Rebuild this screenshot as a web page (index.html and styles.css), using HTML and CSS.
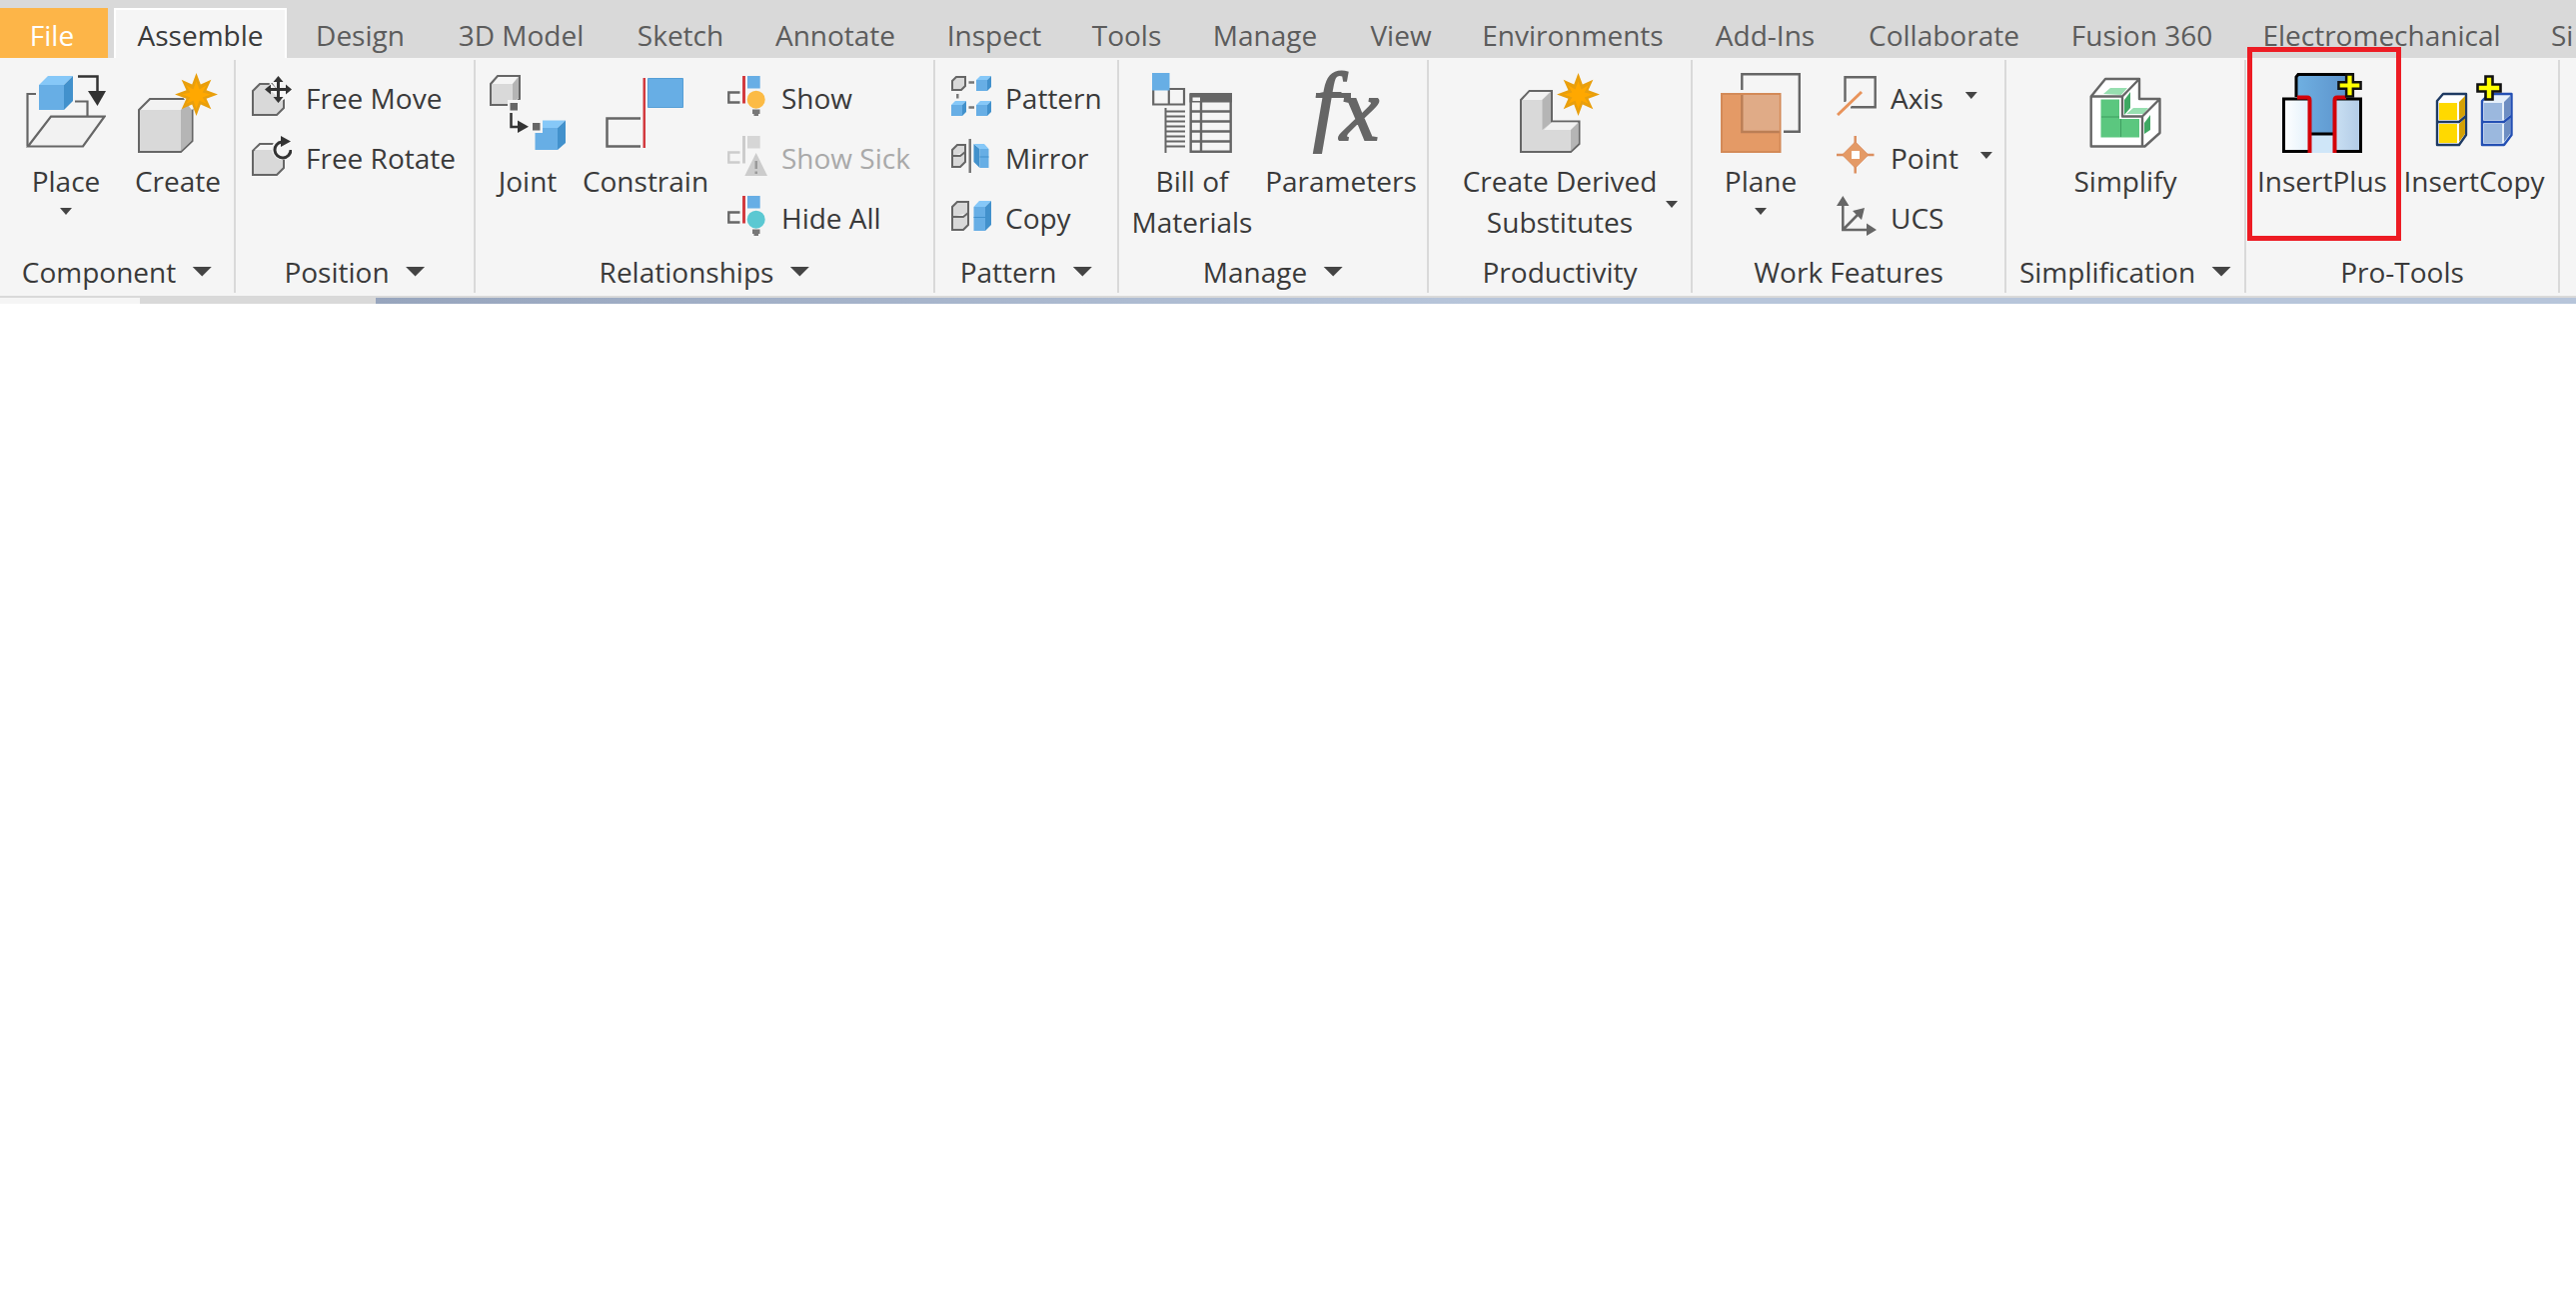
FILE: index.html
```html
<!DOCTYPE html>
<html lang="en">
<head>
<meta charset="utf-8">
<title>Assemble</title>
<link rel="stylesheet" href="styles.css">
</head>
<body>
<svg class="defs" aria-hidden="true">
  <defs>
    <symbol id="star" viewBox="0 0 42 42"><path fill="#e99f0c" d="M21 0l4.200 11.200L35.500 6.500 30.800 16.800 42 21l-11.200 4.200 4.700 10.300-10.300-4.700L21 42l-4.200-11.200L6.500 35.500l4.700-10.300L0 21l11.200-4.200L6.500 6.500l10.300 4.700z"/><path fill="#ffa800" d="M21 8l3 8 7-4-4 7 8 2-8 3 4 6-7-3-3 8-3-8-7 3 4-6-8-3 8-2-4-7 7 4z"/></symbol>
    <symbol id="plus" viewBox="0 0 26 26"><path d="M9.500 1.500h7v8h8v7h-8v8h-7v-8h-8v-7h8z" fill="#ff0" stroke="#111" stroke-width="2.600"/></symbol>
    <symbol id="mini-cube" viewBox="0 0 15 15"><path fill="#67aee5" d="M0 4h11v11H0z"/><path fill="#86c8f8" d="M0 4l4-4h11l-4 4z"/><path fill="#4291cc" d="M11 4l4-4v11l-4 4z"/></symbol>
  </defs>
</svg>

<header>
  <nav class="tabs" aria-label="Ribbon tabs">
    <button class="tab file">File</button>
    <button class="tab active">Assemble</button>
    <button class="tab">Design</button>
    <button class="tab">3D Model</button>
    <button class="tab">Sketch</button>
    <button class="tab">Annotate</button>
    <button class="tab">Inspect</button>
    <button class="tab">Tools</button>
    <button class="tab">Manage</button>
    <button class="tab">View</button>
    <button class="tab">Environments</button>
    <button class="tab">Add-Ins</button>
    <button class="tab">Collaborate</button>
    <button class="tab">Fusion 360</button>
    <button class="tab">Electromechanical</button>
    <button class="tab last">Si</button>
  </nav>

  <div class="ribbon">
    <section class="panel">
      <div class="body component">
        <button class="big">
          <svg viewBox="0 0 80 80"><g fill="none" stroke="#666" stroke-width="2.200"><path d="M10 21H1.500v52M49 28.500h12.500V43"/><path fill="#f2f2f2" d="M2 73.500L25 43.700h53.500L57 73.500z"/></g><path fill="#67aee5" d="M13 12h25v25H13z"/><path fill="#86c8f8" d="M13 12l9-9h25l-9 9z"/><path fill="#4291cc" d="M38 12l9-9v25l-9 9z"/><path d="M52 3.500h19.500V20" fill="none" stroke="#333" stroke-width="2.500"/><path fill="#333" d="M62 18h18l-8.500 15z"/></svg>
          <span>Place</span><i class="caret"></i>
        </button>
        <button class="big">
          <svg viewBox="0 0 80 80"><path fill="#d9d9d9" stroke="#666" stroke-width="2" d="M1 37l11-11h42.500v42L43 79H1z"/><path fill="#f2f2f2" d="M3 37l10-10h40L43 37z"/><path fill="#b5b5b5" d="M43 37l10.500-9v40L43 78z"/><path fill="#f5f5f5" d="M45 24h14v9l-5 4-4-5z"/><use href="#star" x="37" y="0" width="43" height="43"/></svg>
          <span>Create</span>
        </button>
      </div>
      <button class="title">Component<i class="caret wide"></i></button>
    </section>

    <section class="panel">
      <div class="body">
        <div class="rows">
          <button class="row"><svg viewBox="0 0 40 40"><path fill="#d9d9d9" stroke="#666" stroke-width="2" d="M1 15l7-7h12l12 16v8l-7 7H1z"/><path fill="#f5f5f5" d="M18 6l16 16-4 3-4-4-9-8z"/><g fill="#333"><path d="M25 4h3v19h-3zM18 12h18v3H18z"/><path d="M26.500 0l5 6h-10zM26.500 27l5-6h-10zM13 13.500l6-5v10zM40 13.500l-6-5v10z"/></g></svg>Free Move</button>
          <button class="row"><svg viewBox="0 0 40 40"><path fill="#d9d9d9" stroke="#666" stroke-width="2" d="M1 15l7-7h24v24l-7 7H1z"/><path fill="#f5f5f5" d="M3 14l6-5h12v5z"/><circle cx="31" cy="13" r="11" fill="#f5f5f5"/><path fill="none" stroke="#333" stroke-width="3" d="M30 6a8 8 0 1 0 9 8"/><path fill="#333" d="M29 0l10 5.500-10 5.500z"/></svg>Free Rotate</button>
        </div>
      </div>
      <button class="title">Position<i class="caret wide"></i></button>
    </section>

    <section class="panel">
      <div class="body">
        <button class="big narrow">
          <svg viewBox="0 0 80 80"><path fill="#d9d9d9" stroke="#666" stroke-width="2" d="M3 32V11l7-8h22v23l-6 6z"/><path fill="#f5f5f5" d="M5 11l6-7h19l-5 7z"/><path fill="#b5b5b5" d="M25 11l6-7v21l-6 5z"/><path fill="#f5f5f5" d="M20 27h14v12H20z"/><path fill="#67aee5" d="M47.500 55H70v22H47.500z"/><path fill="#86c8f8" d="M48 55l7-7.500h23L70 55z"/><path fill="#4291cc" d="M70 55l8-7.500V70l-8 7z"/><path fill="#f5f5f5" d="M42 47h13v13H42z"/><path fill="#666" d="M22.500 30H30v7.500h-7.500zM45 50h7.500v7.500H45z"/><path fill="none" stroke="#333" stroke-width="2.500" d="M23.500 40v14H32"/><path fill="#333" d="M30 47.500l11 6.200L30 60z"/></svg>
          <span>Joint</span>
        </button>
        <button class="big wide">
          <svg viewBox="0 0 80 80"><path fill="none" stroke="#666" stroke-width="2.500" d="M35 45.500H1.500v28H35"/><path fill="#d23a3f" d="M37.500 5H40v70h-2.500z"/><path fill="#67aee5" stroke="#559fd6" d="M42.500 5.500h35v29h-35z"/></svg>
          <span>Constrain</span>
        </button>
        <div class="rows">
          <button class="row"><svg viewBox="0 0 40 40"><path fill="none" stroke="#666" stroke-width="2.400" d="M12.500 16.500H1.300v10h11.200"/><path fill="#d23a3f" d="M15 0h3v27.500h-3z"/><path fill="#67aee5" d="M20 0h12.700v12.500H20z"/><circle cx="28.700" cy="23.700" r="9" fill="#fcbb45"/><path fill="#777" d="M25 33.500h7.500V38H31v2h-4.500v-2H25z"/></svg>Show</button>
          <button class="row" disabled><svg viewBox="0 0 40 40"><path fill="none" stroke="#ccc" stroke-width="2.400" d="M12.500 16.500H1.300v10h11.200"/><path fill="#ccc" d="M15 0h3v27.500h-3z"/><path fill="#d6d6d6" d="M20 0h12.700v12.500H20z"/><path fill="#ccc" d="M28.700 17L40 40H17.300z"/><path fill="#999" d="M27.500 25h2.500v8h-2.500zM27.500 35.500h2.500V38h-2.500z"/></svg>Show Sick</button>
          <button class="row"><svg viewBox="0 0 40 40"><path fill="none" stroke="#666" stroke-width="2.400" d="M12.500 16.500H1.300v10h11.200"/><path fill="#d23a3f" d="M15 0h3v27.500h-3z"/><path fill="#67aee5" d="M20 0h12.700v12.500H20z"/><circle cx="28.700" cy="23.700" r="9" fill="#5bc8d2"/><path fill="#777" d="M25 33.500h7.500V38H31v2h-4.500v-2H25z"/></svg>Hide All</button>
        </div>
      </div>
      <button class="title">Relationships<i class="caret wide"></i></button>
    </section>

    <section class="panel">
      <div class="body">
        <div class="rows">
          <button class="row"><svg viewBox="0 0 40 40"><path fill="#d9d9d9" stroke="#666" stroke-width="2" d="M1 14V5l4-4h9v9l-4 4z"/><use href="#mini-cube" x="25" y="0" width="15" height="15"/><use href="#mini-cube" x="0" y="25" width="15" height="15"/><use href="#mini-cube" x="25" y="25" width="15" height="15"/><path fill="none" stroke="#777" stroke-width="2.400" d="M17.500 6.500h5.500M17.500 31.500h5.500M6.300 18v4.500"/></svg>Pattern</button>
          <button class="row"><svg viewBox="0 0 40 40"><path fill="#d9d9d9" stroke="#666" stroke-width="2" d="M1 31V14l5-5h8v17l-5 5zM1 20h8l5-4"/><path fill="#777" d="M17.500 3H20v34h-2.500z"/><path fill="#4291cc" d="M22.500 8l6 5v19l-6-6z"/><path fill="#86c8f8" d="M22.500 8H33l4.500 5h-9z"/><path fill="#67aee5" d="M28.500 13h9v19h-9z"/><path stroke="#4291cc" d="M28.500 21h9"/></svg>Mirror</button>
          <button class="row"><svg viewBox="0 0 40 40"><path fill="#d9d9d9" stroke="#666" stroke-width="2" d="M1 34V11l5-5h11v23l-5 5zM1 21h11l5-4"/><path fill="#67aee5" d="M22.500 11H34v24H22.500z"/><path fill="#86c8f8" d="M22.500 11L28 5h12l-6 6z"/><path fill="#4291cc" d="M34 11l6-6v24l-6 6z"/><path stroke="#4291cc" d="M22.500 21.500H34"/></svg>Copy</button>
        </div>
      </div>
      <button class="title">Pattern<i class="caret wide"></i></button>
    </section>

    <section class="panel">
      <div class="body">
        <button class="big two-line">
          <svg viewBox="0 0 80 80"><path fill="#f5f5f5" stroke="#666" stroke-width="2.200" d="M1.200 16H32v15.500H1.200zM16.800 16v15"/><path fill="#67aee5" d="M0 0h17.500v17.500H0z"/><path stroke="#666" stroke-width="2" d="M13.500 35v45M14 38.500h19M14 43.500h19M14 48.500h19M14 53.500h19M14 58.500h19M14 63.500h19M14 68.500h19M14 73.500h19"/><path fill="#666" d="M37.500 20H80v9.500H37.500z"/><path fill="none" stroke="#666" stroke-width="2.400" d="M38.700 21v57.800h40V21M49 25v54M38 38.500h41M38 48.500h41M38 58.500h41M38 68.500h41"/><path fill="#f5f5f5" d="M40.500 24.500h7.500V28h-7.500z"/></svg>
          <span>Bill of<br>Materials</span>
        </button>
        <button class="big params">
          <svg class="fx" viewBox="0 0 80 80"><text x="12" y="61">f</text><text x="39" y="67">x</text><path stroke="none" d="M15 20h35v5H15z"/></svg>
          <span>Parameters</span>
        </button>
      </div>
      <button class="title">Manage<i class="caret wide"></i></button>
    </section>

    <section class="panel">
      <div class="body centered">
        <button class="big derived">
          <svg viewBox="0 0 80 80"><path fill="#d9d9d9" stroke="#666" stroke-width="2" d="M1 27l8.500-9H32v30.500h27.500V71L51 79H1z"/><path fill="#f2f2f2" d="M3 27l7-8h20l-8 8zM24 57l8-7.500h26L51 57z"/><path fill="#b5b5b5" d="M22.500 27l8.500-8v31l-8.500 7zM51 57l7.500-7v20L51 78z"/><use href="#star" x="37" y="0" width="43" height="43"/></svg>
          <span>Create Derived<br>Substitutes</span><i class="caret side"></i>
        </button>
      </div>
      <button class="title">Productivity</button>
    </section>

    <section class="panel">
      <div class="body">
        <button class="big plane">
          <svg viewBox="0 0 80 80"><path fill="none" stroke="#666" stroke-width="2.400" d="M21.300 17V1.200h57.500v57.500H63"/><path fill="#e49a66" stroke="#d38a58" stroke-width="2" d="M1 21h58.500v58H1z"/><path fill="#e0ab87" d="M21.300 22h37.500v37H21.300z"/><path fill="none" stroke="#bb7e55" stroke-width="2.400" d="M21.300 22v37h37.500"/></svg>
          <span>Plane</span><i class="caret"></i>
        </button>
        <div class="rows">
          <button class="row"><svg viewBox="0 0 40 40"><path fill="none" stroke="#666" stroke-width="2.400" d="M8.500 26V1.300h30.200v30H14"/><path stroke="#f5f5f5" stroke-width="7" d="M6 34l8-8"/><path stroke="#e8935a" stroke-width="3" d="M1 39l24-23"/></svg>Axis<i class="caret"></i></button>
          <button class="row"><svg viewBox="0 0 40 40"><path stroke="#dc8f5f" stroke-width="2.500" d="M18.700 0v37.500M0 19h37.500"/><path fill="#e49a66" stroke="#dc8f5f" d="M18.700 6l13 13-13 13-13-13z"/><path fill="#fff" d="M15 15h8v8h-8z"/></svg>Point<i class="caret"></i></button>
          <button class="row"><svg viewBox="0 0 40 40"><path fill="none" stroke="#666" stroke-width="2.500" d="M6.300 8v26H32M6.300 34L22 18"/><path fill="#666" d="M6.300 0l6.200 10H0zM40 34l-10-6.500V40zM28 12l-3 12-9-9z"/></svg>UCS</button>
        </div>
      </div>
      <button class="title">Work Features</button>
    </section>

    <section class="panel">
      <div class="body centered">
        <button class="big">
          <svg viewBox="0 0 80 80"><path fill="#fff" d="M5.700 23L20 6h34v20h20.500v34L59.500 73.500H5.700z"/><path fill="#5bc77f" d="M15.500 26.500H34V46h20v18.500H15.500z"/><path fill="#97dfb0" d="M18 21l7-6h17l-6 7zM41 41l7-6h15l-5 6z"/><path fill="#3fa863" d="M39 27l6-8v16l-6 7zM59 50l6-8v15l-6 4z"/><path stroke="#3f9e60" fill="none" d="M16 44h18M35.500 46v18"/><path fill="none" stroke="#666" stroke-width="2.400" stroke-linejoin="round" d="M5.700 23.500L20 6h34v20h20.500v34l-15 13.500H5.700zM5.700 23.500H37v20h20v30M37 23.500L54 6M57 43.500L74.500 26"/></svg>
          <span>Simplify</span>
        </button>
      </div>
      <button class="title">Simplification<i class="caret wide"></i></button>
    </section>

    <section class="panel">
      <div class="body">
        <button class="big pro-tool marked">
          <svg viewBox="0 0 80 80"><defs><linearGradient id="part"><stop offset="0" stop-color="#fff"/><stop offset=".5" stop-color="#d5eaf9"/><stop offset="1" stop-color="#b2cbe6"/></linearGradient><linearGradient id="bolt"><stop offset="0" stop-color="#6fb0e2"/><stop offset="1" stop-color="#5a8fc8"/></linearGradient></defs><path fill="url(#part)" stroke="#000" stroke-width="3" d="M1.500 26h77v52.500h-77z"/><path fill="#cfe6f8" d="M29 62h23v18H29z"/><path fill="url(#bolt)" d="M14.500 2H72v22H52v37H28V24H14.500z"/><path fill="none" stroke="#000" stroke-width="3" d="M14 24V4l2-2.500h56M28 61h24"/><path fill="none" stroke="#d40008" stroke-width="4" d="M15 24.500h10q2.500 0 2.500 3V80M64 24.500h-9q-2.500 0-2.500 3V80"/><use href="#plus" x="55" y="0" width="25" height="25"/></svg>
          <span>InsertPlus</span>
        </button>
        <button class="big pro-tool">
          <svg viewBox="0 0 80 80"><path fill="#fff" stroke="#1f3b63" stroke-width="2.400" stroke-linejoin="round" d="M3 28l6-7h23v41l-7 10H3z"/><path fill="#ffd900" d="M5 30h18v17H5zM5 51h18v19H5z"/><path fill="#d4a105" d="M25 29l6-6v19l-6 5zM25 51l6-6v16l-6 8z"/><path fill="none" stroke="#1f3b63" stroke-width="2.400" d="M3 49h22l7-6"/><path fill="#e6f0fa" stroke="#2450b4" stroke-width="2.400" stroke-linejoin="round" d="M48 28l7-7h22.500v41L70 72H48z"/><path fill="#9bb8de" d="M50 30h18v17H50zM50 51h18v19H50z"/><path fill="#6d8ec2" d="M70 29l6-6v19l-6 5zM70 51l6-6v16l-6 8z"/><path fill="none" stroke="#2450b4" stroke-width="2.400" d="M48 49h22l7-6"/><use href="#plus" x="42" y="2" width="26" height="26"/></svg>
          <span>InsertCopy</span>
        </button>
      </div>
      <button class="title">Pro-Tools</button>
    </section>
  </div>
  <div class="strip"><span class="strip-light"></span><span class="strip-grey"></span><span class="strip-blue"></span></div>
</header>
<main></main>
</body>
</html>
```
FILE: styles.css
```css
*, *::after { box-sizing: border-box; }

body {
  margin: 0;
  background: #fff;
  color: #3a3a3a;
  font: 28px/40px "Open Sans", "Noto Sans", sans-serif;
  overflow-x: hidden;
}

button {
  margin: 0;
  padding: 0;
  border: 0;
  background: none;
  color: inherit;
  font: inherit;
  white-space: nowrap;
}

svg { display: block; flex: none; }
.defs { position: absolute; width: 0; height: 0; }

/* Tab row */
.tabs {
  display: grid;
  grid-template-columns:
    108fr 182fr 141fr 181fr 138fr 172fr 146fr 119fr
    158fr 114fr 230fr 155fr 203fr 193fr 287fr 51fr;
  padding-top: 8px;
  background: #d9d9d9;
}

.tab {
  display: flex;
  justify-content: center;
  min-width: 0;
  height: 50px;
  padding-top: 7px;
  color: #5c5c5c;
}

.tab.file { padding-right: 4px; background: #fdb548; color: #fff; }
.tab.active {
  margin: 0 3px 0 6px;
  border: 2px solid #fff;
  border-bottom: 0;
  padding-top: 5px;
  background: #f5f5f5;
  color: #3a3a3a;
}
.tab.last { justify-content: flex-start; padding-left: 26px; }

/* Ribbon */
.ribbon {
  display: grid;
  grid-template-columns: 236fr 240fr 460fr 184fr 310fr 264fr 314fr 240fr 314fr 16fr;
  padding: 2px 0 3px;
  border-bottom: 2px solid #d9d9d9;
  background: #f5f5f5;
}

.panel {
  display: flex;
  flex-direction: column;
  min-width: 0;
  border-right: 2px solid #d9d9d9;
}

.body {
  display: flex;
  height: 190px;
  padding-top: 6px;
}
.body.component { padding-left: 10px; }
.body.centered { justify-content: center; }

.big {
  position: relative;
  display: flex;
  flex-direction: column;
  align-items: center;
  width: 112px;
  padding-top: 7px;
  line-height: 41px;
}
.big svg { width: 80px; height: 80px; margin-bottom: 8px; }
.big .caret { margin-top: 6px; }
.big.narrow { width: 104px; }
.big.wide { width: 132px; }
.big.two-line { width: 146px; }
.big.params { width: 152px; }
.big.derived { width: 200px; }
.big.plane { width: 136px; }
.big.pro-tool { width: 152px; }

.fx {
  overflow: visible;
  fill: #666;
  stroke: #666;
  stroke-width: 2px;
  font: italic 88px "Liberation Serif", serif;
}

.rows { display: flex; flex-direction: column; padding-left: 16px; }
.plane + .rows { padding-left: 8px; }

.row {
  display: flex;
  align-items: center;
  gap: 14px;
  height: 60px;
  padding-top: 3px;
}
.row svg { width: 40px; height: 40px; margin-bottom: 3px; }
.row .caret { margin: 0 0 4px 8px; }
.row:disabled { color: #a9a9a9; }

.caret {
  width: 12px;
  height: 7px;
  background: #444;
  clip-path: polygon(0 0, 100% 0, 50% 100%);
}
.caret.wide { width: 20px; height: 10px; }
.big .caret.side {
  position: absolute;
  top: 135px;
  right: -18px;
  margin: 0;
}

.title {
  display: flex;
  align-items: center;
  justify-content: center;
  gap: 16px;
  height: 43px;
}

/* Highlight frame around the tool */
.marked::after {
  content: "";
  position: absolute;
  top: -19px;
  left: 1px;
  width: 154px;
  height: 194px;
  border: 5px solid #ed1c24;
}

/* Strip under the ribbon */
.strip { display: grid; grid-template-columns: 140fr 236fr 2202fr; height: 6px; }
.strip-light { background: #f5f5f5; }
.strip-grey { background: #d9d9d9; }
.strip-blue { background: linear-gradient(90deg, #97a5bd, #b7c5da 50%, #b7c5da); }
```
